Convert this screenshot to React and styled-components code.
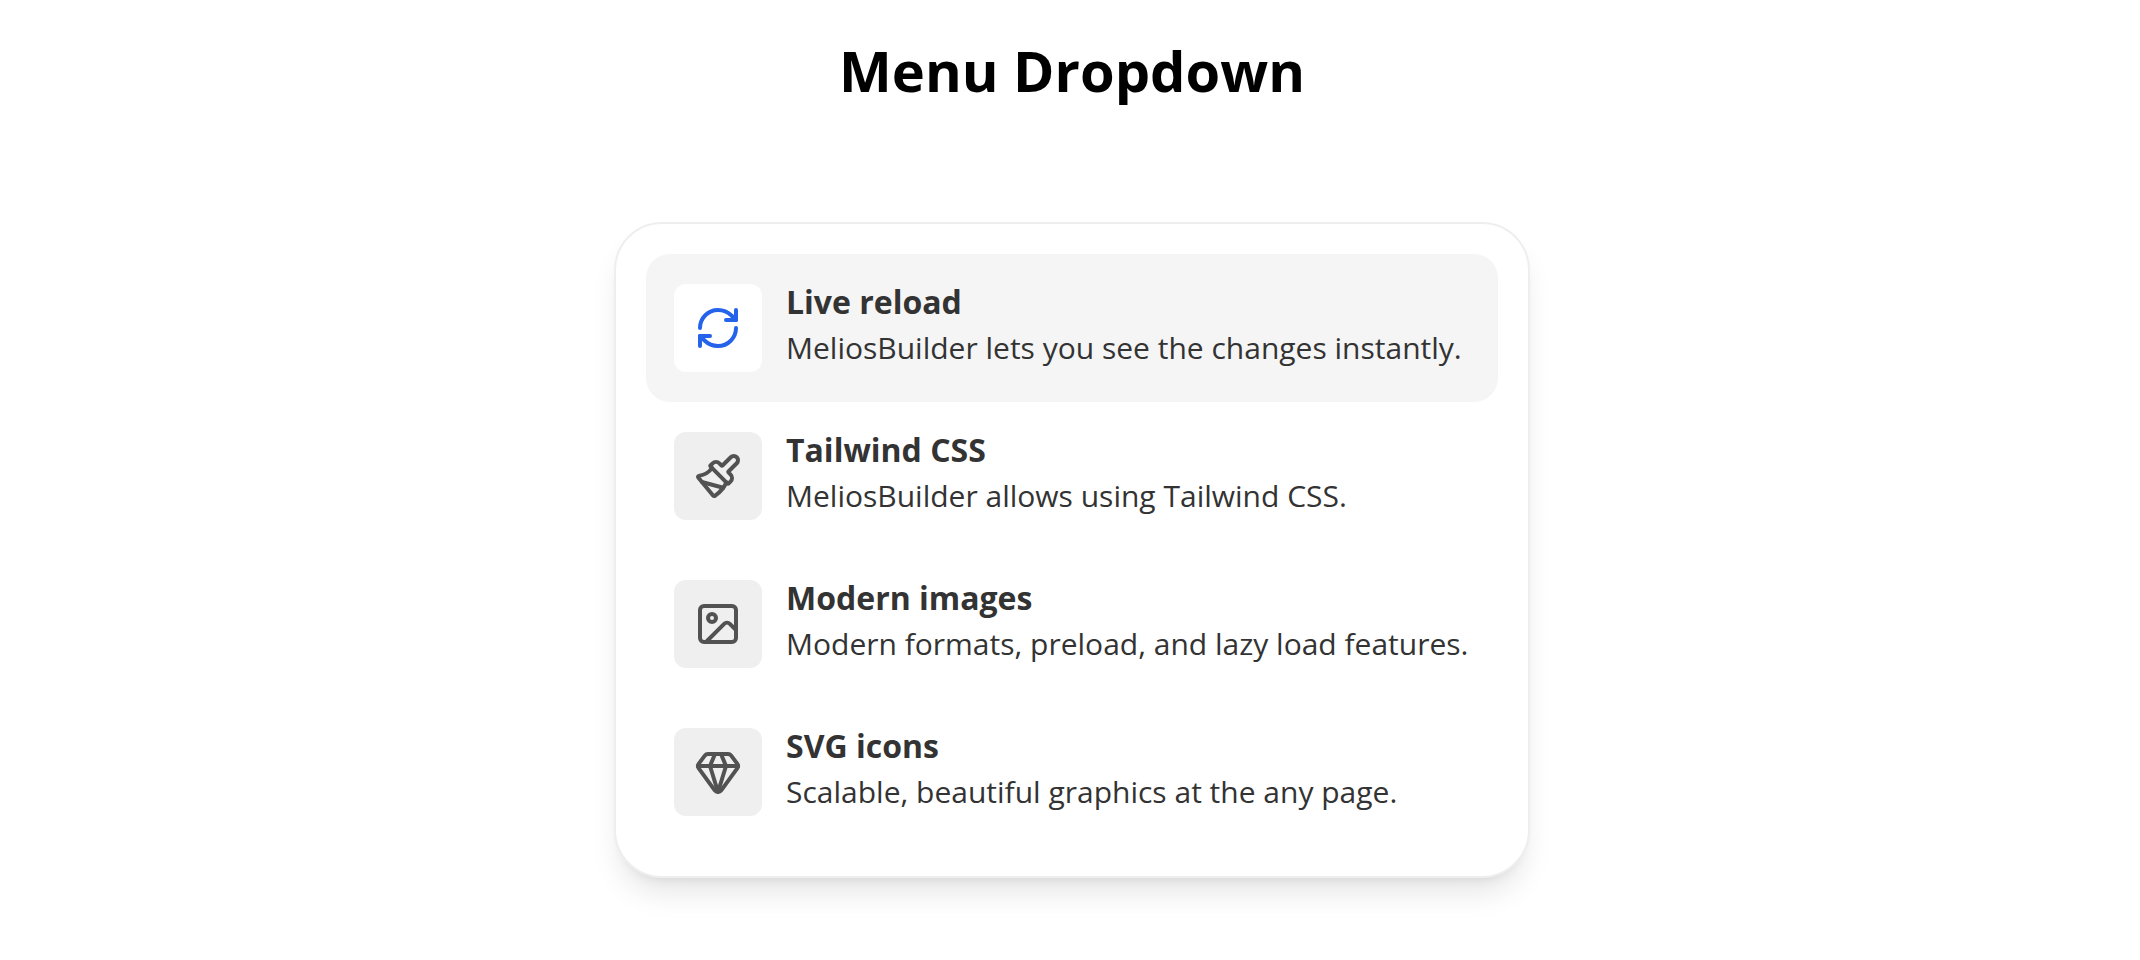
import React from "react";
import styled, { createGlobalStyle } from "styled-components";
import { Gem, Image, Paintbrush, RefreshCw } from "lucide-react";

const items = [
  {
    title: "Live reload",
    text: "MeliosBuilder lets you see the changes instantly.",
    icon: RefreshCw,
    active: true,
  },
  {
    title: "Tailwind CSS",
    text: "MeliosBuilder allows using Tailwind CSS.",
    icon: Paintbrush,
  },
  {
    title: "Modern images",
    text: "Modern formats, preload, and lazy load features.",
    icon: Image,
  },
  {
    title: "SVG icons",
    text: "Scalable, beautiful graphics at the any page.",
    icon: Gem,
  },
];

const App = () => {
  return (
    <>
      <GlobalStyle />
      <Page>
        <Title>Menu Dropdown</Title>
        <Menu>
          {items.map(({ title, text, icon: Icon, active }) => (
            <li key={title}>
              <MenuLink href="#" $active={active}>
                <IconBox $active={active}>
                  <Icon size={48} strokeWidth={2} aria-hidden="true" />
                </IconBox>
                <div>
                  <ItemTitle>{title}</ItemTitle>
                  <ItemText>{text}</ItemText>
                </div>
              </MenuLink>
            </li>
          ))}
        </Menu>
      </Page>
    </>
  );
};

const GlobalStyle = createGlobalStyle`
  * {
    box-sizing: border-box;
  }
  body {
    margin: 0;
    background: #fff;
    font-family: "Open Sans", "Noto Sans", sans-serif;
  }
`;

const Page = styled.main`
  display: flex;
  flex-direction: column;
  align-items: center;
  padding: 30px 16px 80px 20px;
`;

const Title = styled.h1`
  margin: 0 0 112px;
  font-size: 56px;
  line-height: 80px;
  font-weight: 700;
  color: #000;
`;

const Menu = styled.ul`
  width: 100%;
  max-width: 916px;
  margin: 0;
  padding: 30px;
  list-style: none;
  background: #fff;
  border: 2px solid #eee;
  border-radius: 48px;
  box-shadow: 0 20px 30px -6px rgba(0, 0, 0, 0.1),
    0 8px 12px -8px rgba(0, 0, 0, 0.1);
`;

const MenuLink = styled.a`
  display: flex;
  gap: 24px;
  padding: 30px 28px;
  border-radius: 24px;
  background: ${({ $active }) => ($active ? "#f5f5f5" : "transparent")};
  color: #333;
  text-decoration: none;
`;

const IconBox = styled.span`
  display: flex;
  flex: none;
  align-items: center;
  justify-content: center;
  width: 88px;
  height: 88px;
  border-radius: 12px;
  background: ${({ $active }) => ($active ? "#fff" : "#efefef")};
  color: ${({ $active }) => ($active ? "#2563eb" : "#525252")};
`;

const ItemTitle = styled.h2`
  margin: 0 0 8px;
  font-size: 32px;
  line-height: 36px;
  font-weight: 700;
`;

const ItemText = styled.p`
  margin: 0;
  font-size: 30px;
  line-height: 40px;
`;

export default App;
